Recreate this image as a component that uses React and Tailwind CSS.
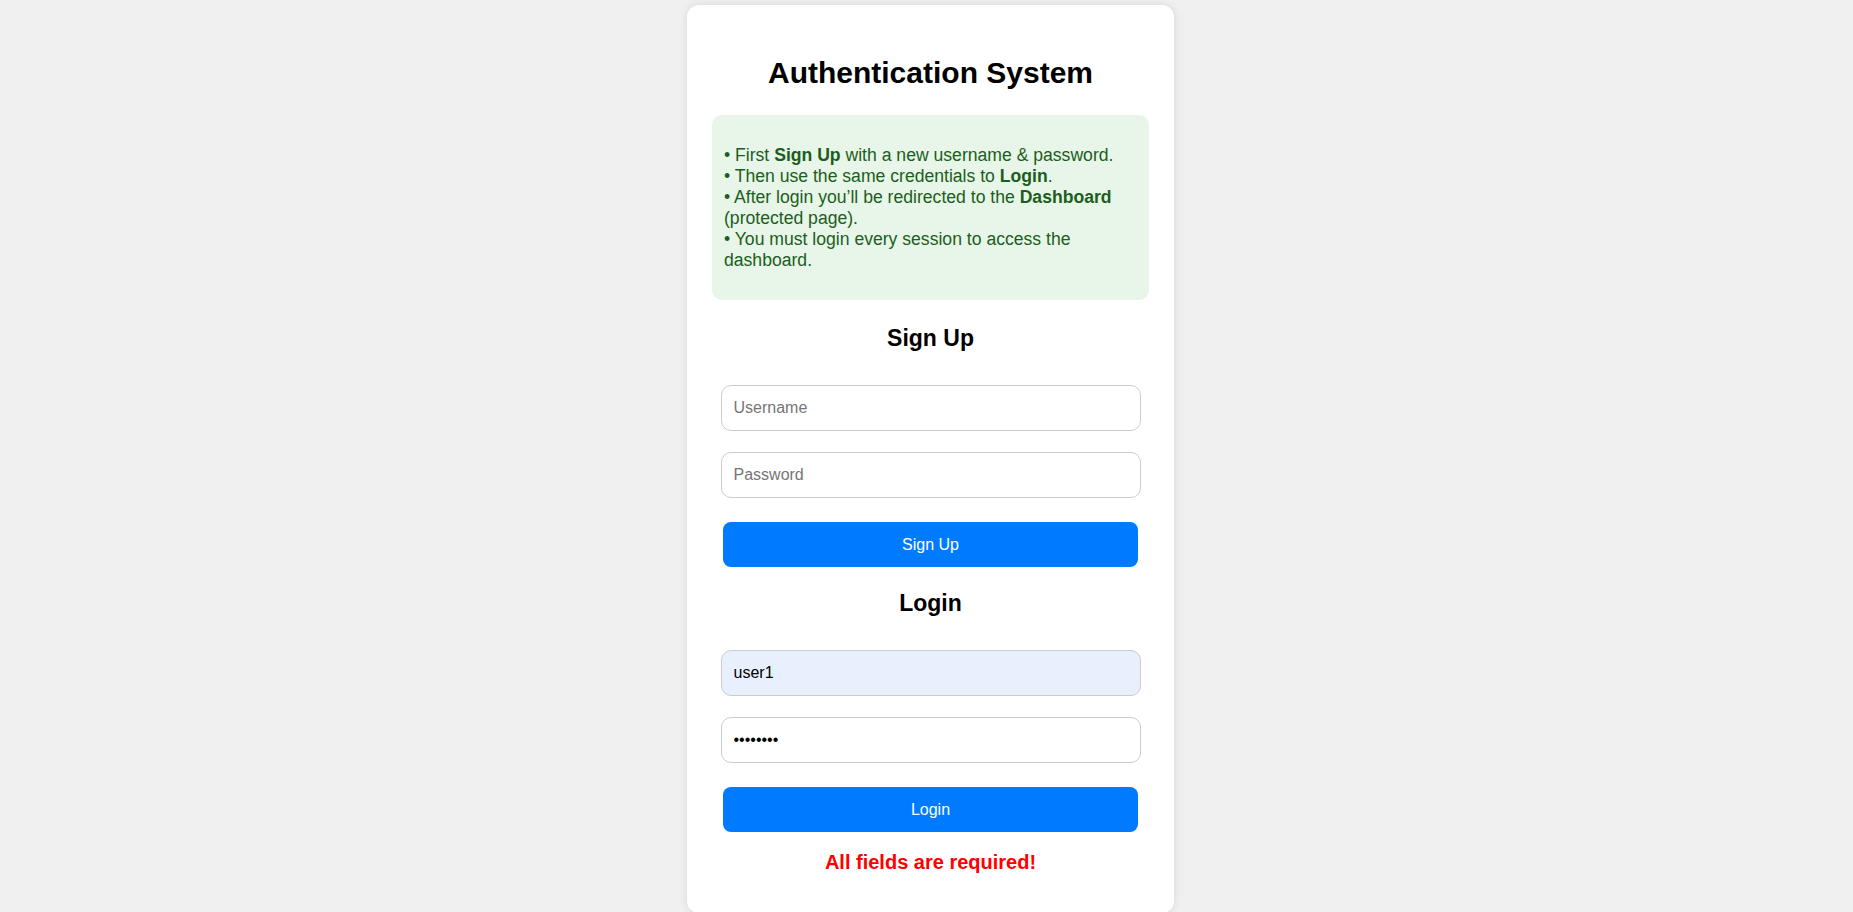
import React, { useState } from 'react';

const AuthPage = () => {
  const [signupUser, setSignupUser] = useState('');
  const [signupPass, setSignupPass] = useState('');
  const [loginUser, setLoginUser] = useState('user1');
  const [loginPass, setLoginPass] = useState('password');
  const [message] = useState('All fields are required!');

  const inputClass =
    'block w-[420px] h-[46px] px-[12px] border border-[#ccc] rounded-[10px] text-[16px] text-black placeholder:text-[#757575] outline-none';

  return (
    <div className="min-h-screen bg-[#f0f0f0] flex justify-center pl-[8px] pt-[5px] font-['Liberation_Sans',Arial,sans-serif]">
      <div className="w-[487px] h-[908px] bg-white rounded-[12px] shadow-[0_0_10px_rgba(0,0,0,0.1)] px-[25px] pt-[51px]">
        {/* Title */}
        <h1 className="text-center text-[30px] leading-[34px] font-bold text-black">
          Authentication System
        </h1>

        {/* Instructions */}
        <div className="mt-[25px] h-[185px] bg-[#e8f5e9] rounded-[10px] pl-[12px] pr-[12px] pt-[30px] text-[17.6px] leading-[21px] text-[#1b5e20]">
          • First <b>Sign Up</b> with a new username &amp; password.
          <br />
          • Then use the same credentials to <b>Login</b>.
          <br />
          • After login you’ll be redirected to the <b>Dashboard</b> (protected page).
          <br />
          • You must login every session to access the dashboard.
        </div>

        {/* Sign Up */}
        <h2 className="mt-[25px] text-center text-[23px] leading-[26px] font-bold text-black">
          Sign Up
        </h2>
        <div className="mt-[34px] flex flex-col items-center">
          <input
            className={inputClass}
            placeholder="Username"
            value={signupUser}
            onChange={(e) => setSignupUser(e.target.value)}
          />
          <input
            type="password"
            className={`${inputClass} mt-[21px]`}
            placeholder="Password"
            value={signupPass}
            onChange={(e) => setSignupPass(e.target.value)}
          />
          <button className="mt-[24px] w-[415px] h-[45px] bg-[#007bff] text-white text-[16px] rounded-[8px]">
            Sign Up
          </button>
        </div>

        {/* Login */}
        <h2 className="mt-[23px] text-center text-[23px] leading-[26px] font-bold text-black">
          Login
        </h2>
        <div className="mt-[34px] flex flex-col items-center">
          <input
            className={`${inputClass} bg-[#e8f0fe]`}
            placeholder="Username"
            value={loginUser}
            onChange={(e) => setLoginUser(e.target.value)}
          />
          <input
            type="password"
            className={`${inputClass} mt-[21px]`}
            placeholder="Password"
            value={loginPass}
            onChange={(e) => setLoginPass(e.target.value)}
          />
          <button className="mt-[24px] w-[415px] h-[45px] bg-[#007bff] text-white text-[16px] rounded-[8px]">
            Login
          </button>
        </div>

        <p className="mt-[19px] text-center text-[20px] leading-[23px] font-bold text-[#ff0000]">
          {message}
        </p>
      </div>
    </div>
  );
};

export default function App() {
  return <AuthPage />;
}
